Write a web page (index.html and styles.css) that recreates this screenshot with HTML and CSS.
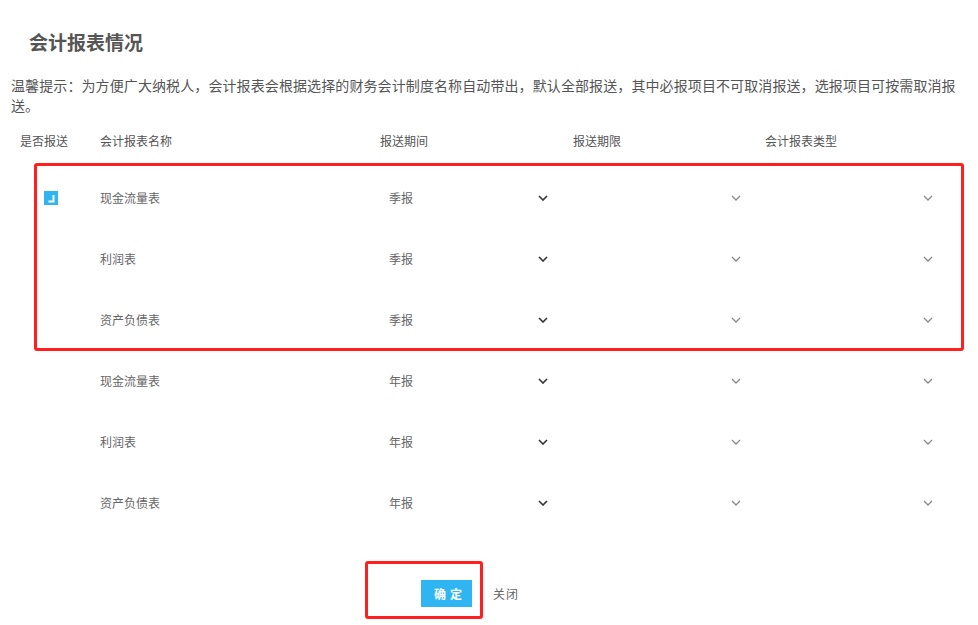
FILE: index.html
```html
<!DOCTYPE html>
<html lang="zh-CN">
<head>
<meta charset="utf-8">
<title>会计报表情况</title>
<link rel="stylesheet" href="styles.css">
</head>
<body>
<div class="page">
  <h1 class="title">会计报表情况</h1>
  <p class="hint">温馨提示：为方便广大纳税人，会计报表会根据选择的财务会计制度名称自动带出，默认全部报送，其中必报项目不可取消报送，选报项目可按需取消报送。</p>

  <div class="table">
    <div class="row head">
      <div class="cell">是否报送</div>
      <div class="cell">会计报表名称</div>
      <div class="cell">报送期间</div>
      <div class="cell">报送期限</div>
      <div class="cell">会计报表类型</div>
    </div>

    <div class="body">
      <div class="row">
        <div class="cell"><span class="check"><svg width="14" height="14" viewBox="0 0 14 14"><path d="M9.5 4v6.5H4.5" fill="none" stroke="#fff" stroke-width="2"/></svg></span></div>
        <div class="cell">现金流量表</div>
        <div class="cell"><div class="select"><span>季报</span><svg class="chev dark" width="10" height="6" viewBox="0 0 10 6"><path d="M1 1l4 4 4-4" fill="none" stroke-width="1.6"/></svg></div></div>
        <div class="cell"><div class="select"><span></span><svg class="chev" width="10" height="6" viewBox="0 0 10 6"><path d="M1 1l4 4 4-4" fill="none" stroke-width="1.3"/></svg></div></div>
        <div class="cell"><div class="select"><span></span><svg class="chev" width="10" height="6" viewBox="0 0 10 6"><path d="M1 1l4 4 4-4" fill="none" stroke-width="1.3"/></svg></div></div>
      </div>
      <div class="row">
        <div class="cell"></div>
        <div class="cell">利润表</div>
        <div class="cell"><div class="select"><span>季报</span><svg class="chev dark" width="10" height="6" viewBox="0 0 10 6"><path d="M1 1l4 4 4-4" fill="none" stroke-width="1.6"/></svg></div></div>
        <div class="cell"><div class="select"><span></span><svg class="chev" width="10" height="6" viewBox="0 0 10 6"><path d="M1 1l4 4 4-4" fill="none" stroke-width="1.3"/></svg></div></div>
        <div class="cell"><div class="select"><span></span><svg class="chev" width="10" height="6" viewBox="0 0 10 6"><path d="M1 1l4 4 4-4" fill="none" stroke-width="1.3"/></svg></div></div>
      </div>
      <div class="row">
        <div class="cell"></div>
        <div class="cell">资产负债表</div>
        <div class="cell"><div class="select"><span>季报</span><svg class="chev dark" width="10" height="6" viewBox="0 0 10 6"><path d="M1 1l4 4 4-4" fill="none" stroke-width="1.6"/></svg></div></div>
        <div class="cell"><div class="select"><span></span><svg class="chev" width="10" height="6" viewBox="0 0 10 6"><path d="M1 1l4 4 4-4" fill="none" stroke-width="1.3"/></svg></div></div>
        <div class="cell"><div class="select"><span></span><svg class="chev" width="10" height="6" viewBox="0 0 10 6"><path d="M1 1l4 4 4-4" fill="none" stroke-width="1.3"/></svg></div></div>
      </div>
      <div class="row">
        <div class="cell"></div>
        <div class="cell">现金流量表</div>
        <div class="cell"><div class="select"><span>年报</span><svg class="chev dark" width="10" height="6" viewBox="0 0 10 6"><path d="M1 1l4 4 4-4" fill="none" stroke-width="1.6"/></svg></div></div>
        <div class="cell"><div class="select"><span></span><svg class="chev" width="10" height="6" viewBox="0 0 10 6"><path d="M1 1l4 4 4-4" fill="none" stroke-width="1.3"/></svg></div></div>
        <div class="cell"><div class="select"><span></span><svg class="chev" width="10" height="6" viewBox="0 0 10 6"><path d="M1 1l4 4 4-4" fill="none" stroke-width="1.3"/></svg></div></div>
      </div>
      <div class="row">
        <div class="cell"></div>
        <div class="cell">利润表</div>
        <div class="cell"><div class="select"><span>年报</span><svg class="chev dark" width="10" height="6" viewBox="0 0 10 6"><path d="M1 1l4 4 4-4" fill="none" stroke-width="1.6"/></svg></div></div>
        <div class="cell"><div class="select"><span></span><svg class="chev" width="10" height="6" viewBox="0 0 10 6"><path d="M1 1l4 4 4-4" fill="none" stroke-width="1.3"/></svg></div></div>
        <div class="cell"><div class="select"><span></span><svg class="chev" width="10" height="6" viewBox="0 0 10 6"><path d="M1 1l4 4 4-4" fill="none" stroke-width="1.3"/></svg></div></div>
      </div>
      <div class="row">
        <div class="cell"></div>
        <div class="cell">资产负债表</div>
        <div class="cell"><div class="select"><span>年报</span><svg class="chev dark" width="10" height="6" viewBox="0 0 10 6"><path d="M1 1l4 4 4-4" fill="none" stroke-width="1.6"/></svg></div></div>
        <div class="cell"><div class="select"><span></span><svg class="chev" width="10" height="6" viewBox="0 0 10 6"><path d="M1 1l4 4 4-4" fill="none" stroke-width="1.3"/></svg></div></div>
        <div class="cell"><div class="select"><span></span><svg class="chev" width="10" height="6" viewBox="0 0 10 6"><path d="M1 1l4 4 4-4" fill="none" stroke-width="1.3"/></svg></div></div>
      </div>
      <div class="mark mark-rows"></div>
    </div>
  </div>

  <div class="footer">
    <div class="btn-wrap">
      <button class="btn-ok">确定</button>
      <div class="mark mark-btn"></div>
    </div>
    <a class="btn-close">关闭</a>
  </div>
</div>
</body>
</html>
```

FILE: styles.css
```css
html, body {
  margin: 0;
  padding: 0;
  background: #fff;
}

body {
  font-family: "Noto Sans CJK SC", "Noto Sans", sans-serif;
  color: #555;
}

.page {
  width: 978px;
  height: 625px;
  overflow: hidden;
}

.title {
  margin: 30px 0 0 29px;
  font-size: 19px;
  line-height: 24px;
  font-weight: bold;
  color: #555;
}

.hint {
  margin: 21px 20px 0 11px;
  font-size: 14px;
  line-height: 20px;
  letter-spacing: 0.1px;
  color: #555;
}

.table {
  margin-top: 11px;
  padding-left: 20px;
}

.row {
  display: grid;
  grid-template-columns: 80px 280px 193px 192px 193px;
  align-items: center;
  height: 61px;
  font-size: 12px;
  color: #666;
}

.row.head {
  height: 30px;
  color: #555;
}

.body {
  position: relative;
  padding-top: 11px;
}

.cell {
  line-height: 16px;
}

.check {
  display: block;
  width: 14px;
  height: 14px;
  margin: 1px 0 0 24px;
  background: #2fb5f2;
}

.check svg {
  display: block;
}

.select {
  display: flex;
  align-items: center;
  justify-content: space-between;
  width: 172px;
  padding: 0 4px 0 9px;
  box-sizing: border-box;
}

.chev {
  display: block;
  stroke: #8a8a8a;
}

.chev.dark {
  stroke: #333;
}

.mark {
  position: absolute;
  border: 3px solid #ff1f1f;
  border-radius: 3px;
  pointer-events: none;
}

.mark-rows {
  left: 14px;
  top: 7px;
  width: 924px;
  height: 182px;
}

.footer {
  display: flex;
  align-items: center;
  margin-top: 47px;
  padding-left: 421px;
}

.btn-wrap {
  position: relative;
}

.btn-ok {
  display: block;
  width: 51px;
  height: 27px;
  padding: 0 0 0 13px;
  border: none;
  background: #2fb5f2;
  color: #fff;
  font-family: "Noto Sans CJK SC", sans-serif;
  font-size: 12px;
  font-weight: bold;
  letter-spacing: 4px;
  text-align: left;
}

.mark-btn {
  left: -56px;
  top: -19px;
  width: 112px;
  height: 52px;
}

.btn-close {
  margin-left: 21px;
  font-size: 12px;
  letter-spacing: 1px;
  color: #666;
}
```
